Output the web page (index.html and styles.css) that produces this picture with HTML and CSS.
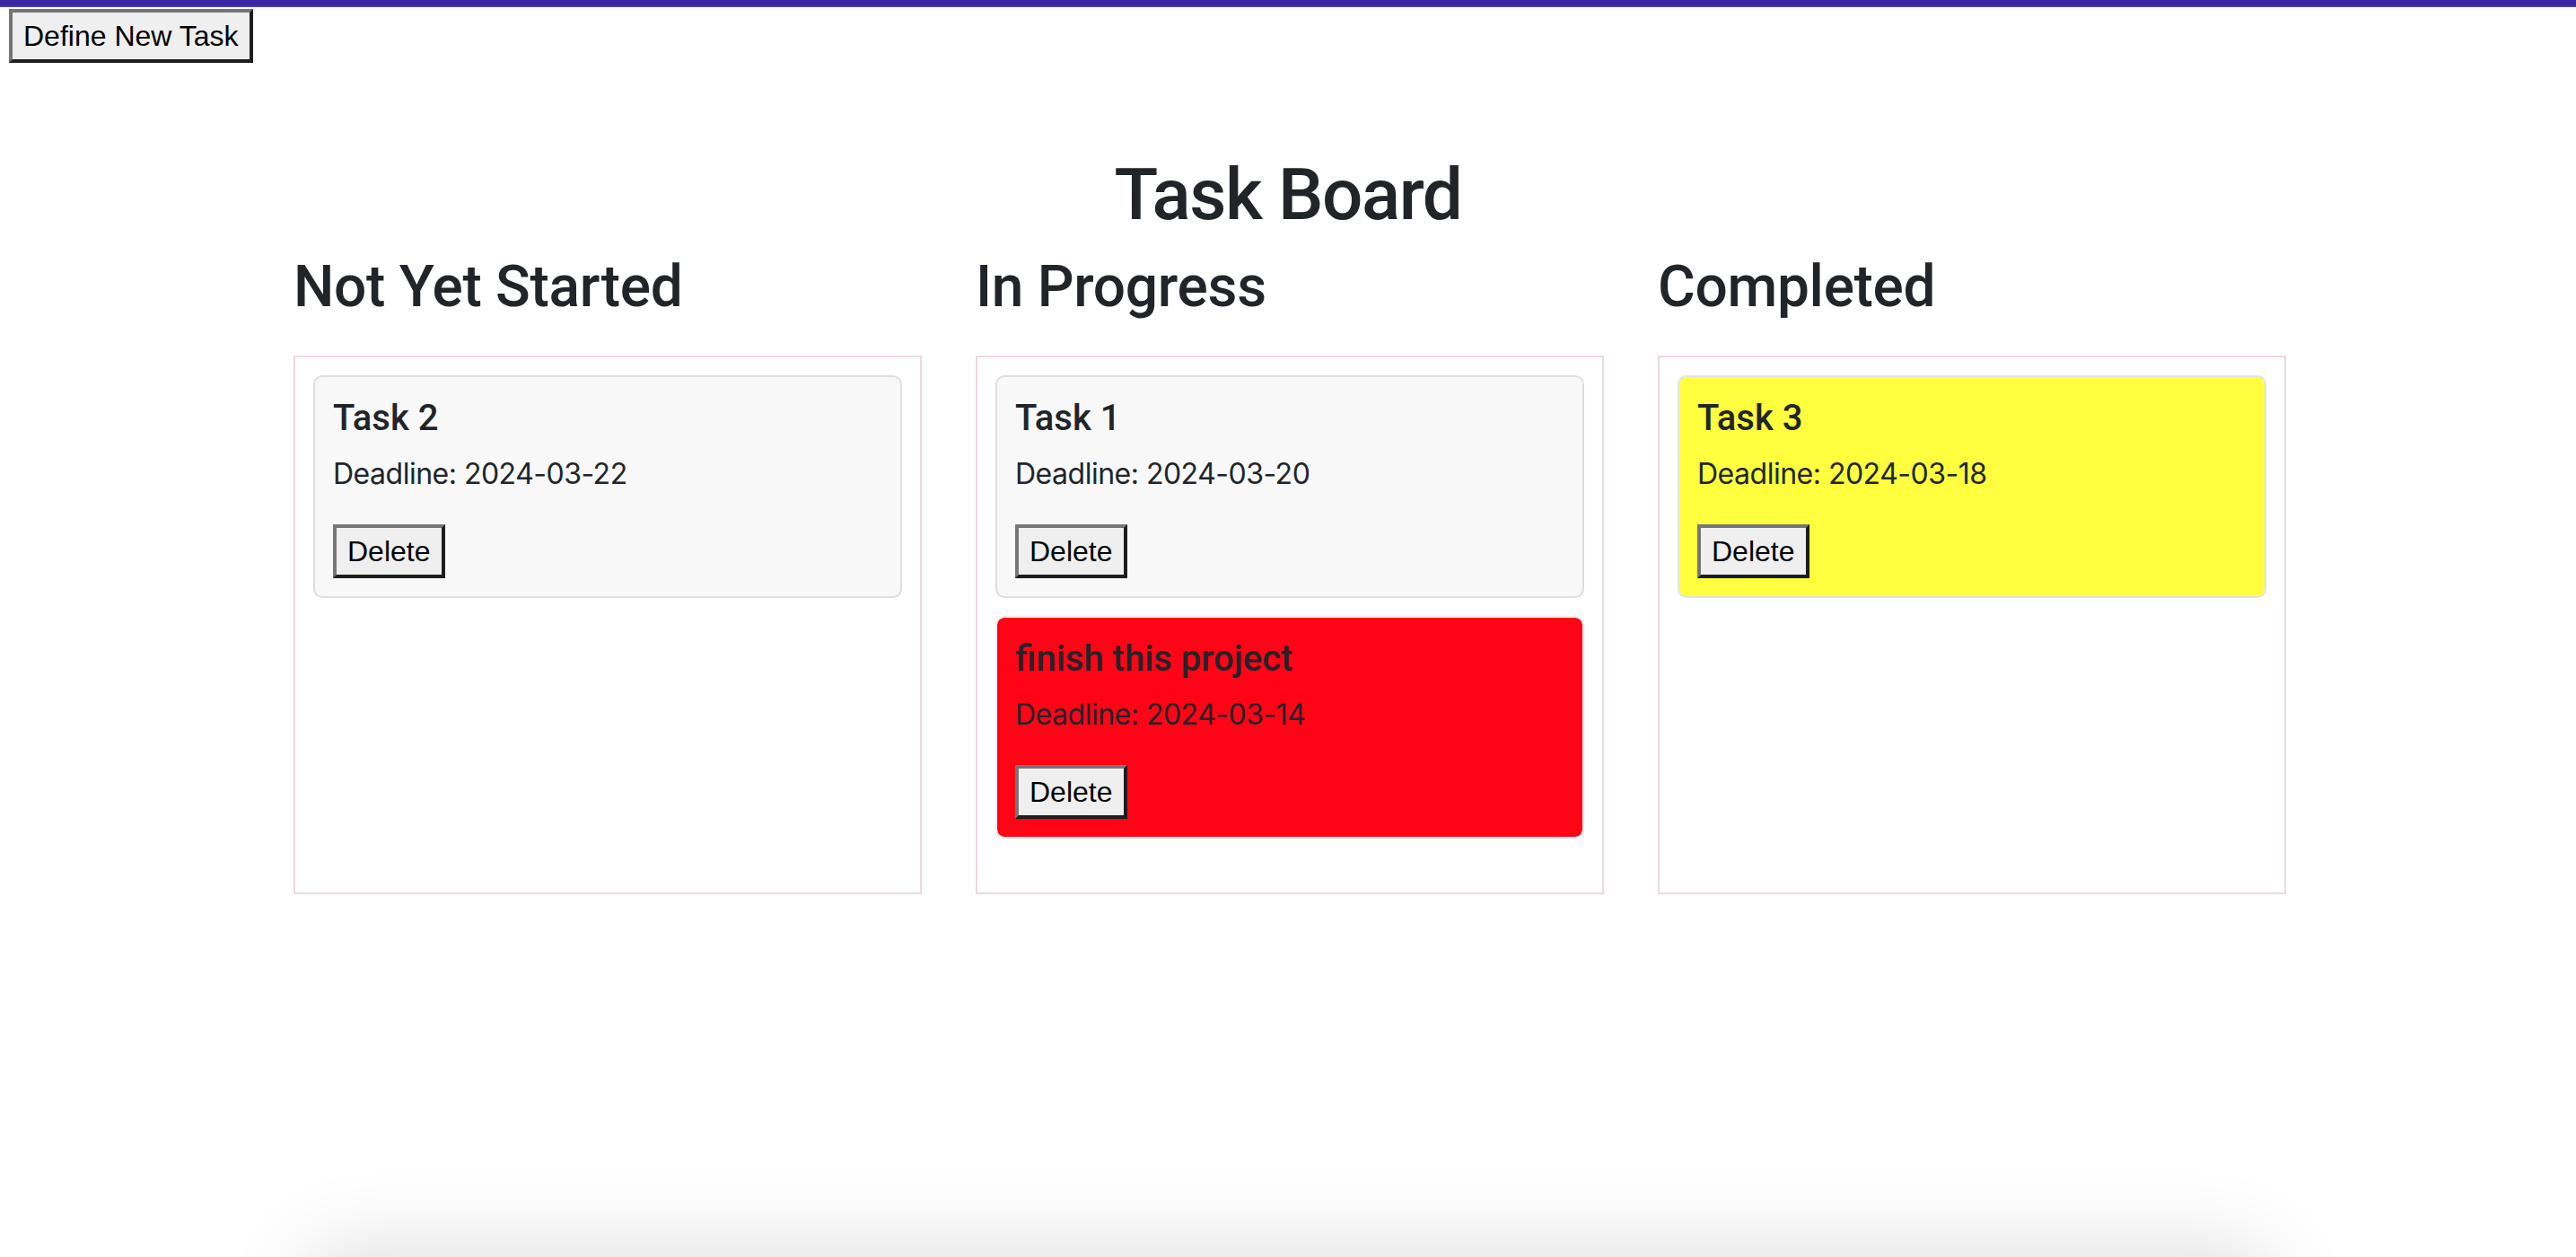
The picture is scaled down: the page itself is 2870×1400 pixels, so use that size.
FILE: index.html
```html
<!DOCTYPE html>
<html lang="en">
<head>
<meta charset="utf-8">
<title>Task Board</title>
<link rel="stylesheet" href="styles.css">
</head>
<body>
<div class="page">
  <div class="topbar"></div>
  <button class="btn define-btn">Define New Task</button>
  <main class="board">
    <h1 class="board-title">Task Board</h1>
    <div class="columns">
      <section class="column">
        <h2 class="column-title">Not Yet Started</h2>
        <div class="column-box">
          <div class="card card-default">
            <h5 class="card-title">Task 2</h5>
            <p class="card-deadline">Deadline: 2024-03-22</p>
            <button class="btn">Delete</button>
          </div>
        </div>
      </section>
      <section class="column">
        <h2 class="column-title">In Progress</h2>
        <div class="column-box">
          <div class="card card-default">
            <h5 class="card-title">Task 1</h5>
            <p class="card-deadline">Deadline: 2024-03-20</p>
            <button class="btn">Delete</button>
          </div>
          <div class="card card-red">
            <h5 class="card-title">finish this project</h5>
            <p class="card-deadline">Deadline: 2024-03-14</p>
            <button class="btn">Delete</button>
          </div>
        </div>
      </section>
      <section class="column">
        <h2 class="column-title">Completed</h2>
        <div class="column-box">
          <div class="card card-yellow">
            <h5 class="card-title">Task 3</h5>
            <p class="card-deadline">Deadline: 2024-03-18</p>
            <button class="btn">Delete</button>
          </div>
        </div>
      </section>
    </div>
  </main>
</div>
<div class="sheet"></div>
</body>
</html>
```
FILE: styles.css
```css
* { box-sizing: border-box; }

html, body {
  margin: 0;
  padding: 0;
  background: #ffffff;
}

body {
  font-family: Roboto, "Liberation Sans", Arial, sans-serif;
  color: #212529;
}

.page {
  min-height: 1400px;
  padding-bottom: 1px;
}

.topbar {
  height: 8px;
  background: linear-gradient(#3a27a7 0, #3a27a7 6px, #5a4ab4 8px);
}

.btn {
  font-family: "Liberation Sans", Arial, sans-serif;
  font-size: 32px;
  line-height: 48px;
  color: #000;
  background: #efefef;
  padding: 2px 12px;
  border-width: 4px;
  border-style: solid;
  border-color: #767676 #1e1e1e #1e1e1e #767676;
  border-radius: 0;
  margin: 0;
  cursor: pointer;
}

.define-btn {
  display: block;
  margin: 2px 0 0 10px;
}

.board {
  width: 2220px;
  margin: 0 auto;
}

.board-title {
  margin: 99px 0 16px;
  font-size: 80px;
  line-height: 96px;
  font-weight: 500;
  letter-spacing: -1.4px;
  text-align: center;
}

.columns {
  display: grid;
  grid-template-columns: repeat(3, 700px);
  column-gap: 60px;
  padding-left: 2px;
}

.column-title {
  margin: 0 0 38px;
  font-size: 64px;
  line-height: 77px;
  font-weight: 500;
  letter-spacing: -0.3px;
}

.column-box {
  min-height: 600px;
  border: 2px solid #ecd9db;
  padding: 20px;
}

.card {
  border: 2px solid #dedede;
  border-radius: 10px;
  padding: 22px 20px 20px;
  margin-bottom: 20px;
  background-clip: padding-box;
}

.card:last-child { margin-bottom: 0; }

.card-default { background-color: #f8f8f8; }
.card-red { background-color: #ff0316; border-color: #eeeeee; }
.card-yellow { background-color: #ffff3f; border-color: #e2e2e2; }

.card-title {
  margin: 0 0 14px;
  font-size: 40px;
  line-height: 48px;
  font-weight: 500;
}

.card-deadline {
  margin: 0 0 32px;
  font-family: Inter, Roboto, sans-serif;
  font-size: 32px;
  line-height: 48px;
  letter-spacing: -0.5px;
}

.sheet {
  width: 2170px;
  height: 200px;
  margin: 0 auto;
  background: #fff;
  box-shadow: 0 0 100px rgba(0, 0, 0, 0.16);
}
```
